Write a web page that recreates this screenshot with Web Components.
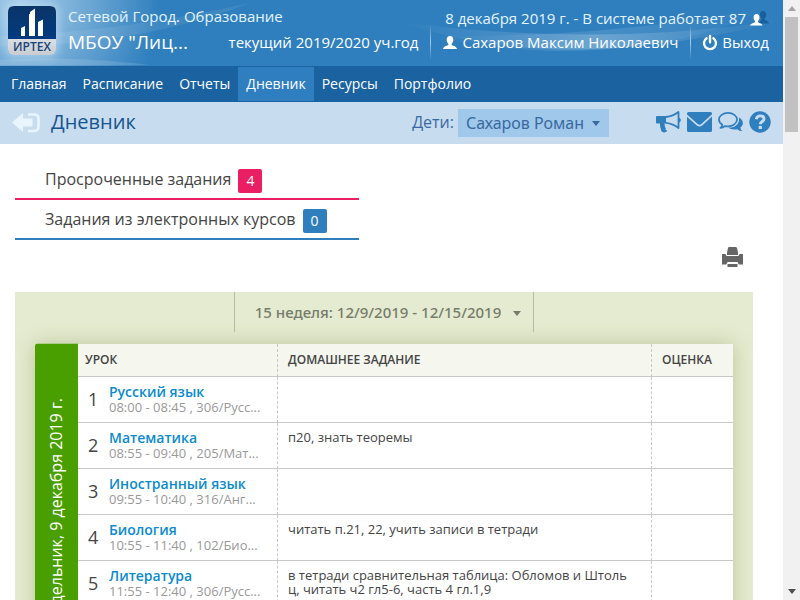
<!DOCTYPE html>
<html lang="ru">
<head>
<meta charset="utf-8">
<meta name="viewport" content="width=device-width, initial-scale=1">
<title>Дневник</title>
<style>
html,body{margin:0;height:100%}
body{font-family:"Open Sans","Noto Sans",sans-serif;color:#444;background:#fff}
</style>
</head>
<body>
<diary-app></diary-app>
<script>
const define=(name,html,setup)=>{
  const t=document.createElement('template');
  t.innerHTML=html;
  customElements.define(name,class extends HTMLElement{
    constructor(){super();this.attachShadow({mode:'open'}).append(t.content.cloneNode(true));}
    connectedCallback(){if(setup&&!this.ready){this.ready=true;setup(this,this.shadowRoot);}}
  });
};

const icons={
  user:['0 0 14 13','<path d="M7 0C4.8 0 3.7 1.6 3.7 3.6c0 1.900.7 3.400 1.700 4.200v1C4.800 9.800.6 10 0 13h14c-.6-3-4.800-3.200-5.400-4.200v-1c1-.8 1.700-2.300 1.700-4.200C10.300 1.600 9.200 0 7 0z"/>'],
  users:['0 0 19 15','<path fill="#195f9f" d="M13 0c-2 0-3 1.400-3 3.400 0 1.800.6 3.100 1.500 3.900v1.200C11 10 9 11 8 12.500h11c-.6-2.500-3.700-2.800-4.400-4V7.300c.9-.8 1.600-2.100 1.600-3.900C16.200 1.400 15 0 13 0z"/><path fill="#fff" d="M6.500 3C4.600 3 3.600 4.400 3.600 6.200c0 1.700.5 3 1.400 3.700v1C4.400 12 .6 12 0 14.600h12.500c-.5-2.600-4-2.600-4.500-3.700v-1c.9-.7 1.500-2 1.500-3.700C9.500 4.400 8.400 3 6.500 3z"/>'],
  power:['0 0 14 15','<path fill="none" stroke="currentColor" stroke-width="2.400" stroke-linecap="round" d="M3.600 3.200a6 6 0 1 0 6.800 0M7 1v6.300"/>'],
  back:['0 0 28 20','<path d="M0 9.500 11 0v5.500h9.500v8H11V19z"/><path fill="none" stroke="currentColor" stroke-width="2.600" d="M16 1.500h6q4.500 0 4.500 4v8q0 4.500-4.500 4.500h-6"/>'],
  horn:['0 0 25 22','<path d="M0 6q0-1 1-1h9v7.500H8.500l.5 3.500.9 1.200-.6 1 1.800 1.600C10.300 21.800 6.500 22 5.500 20.300 5 18 3.700 16 4 12.500H1q-1 0-1-1z"/><path fill="none" stroke="currentColor" stroke-width="1.800" stroke-linejoin="round" d="M10 6q7-.8 12.500-5v16Q17 12.600 10 11.800M23 7.300q2 1.800 0 3.600"/>'],
  mail:['0 0 25 20','<path d="M1.500 0h22Q25 0 25 1.500v.7L14.300 12q-1.800 1.600-3.600 0L0 2.500V1.500Q0 0 1.500 0zM0 4.700l9.800 8.700q2.700 2.200 5.400 0L25 4.500v14q0 1.500-1.500 1.500h-22Q0 20 0 18.500z"/>'],
  chat:['0 0 26 21','<path fill="none" stroke="currentColor" stroke-width="1.800" stroke-linejoin="round" d="M10.400.9c5.200 0 9.400 3.200 9.400 7s-4.200 7-9.400 7q-1.500 0-2.900-.3Q5 16.500 2.500 16.600q1.700-1.500 2-3.300C2.300 12 1 10.100 1 7.900c0-3.800 4.200-7 9.400-7z"/><path d="M21.700 5.600c5 2.800 5.600 7.800 1.500 10.400q.4 2.500 2.300 3.900-3.300 0-5.500-2c-4.200.8-7.200 0-9.500-1.700 7.400.4 12.600-4.200 11.200-10.600z"/>'],
  help:['0 0 22 22','<circle cx="11" cy="11" r="10.700"/><path fill="none" stroke="#c8dcf0" stroke-width="2.900" d="M7.300 8.200c.4-2.300 1.900-3.300 3.900-3.300 2.200 0 3.800 1.200 3.800 3 0 2.600-3.700 2.500-3.700 5.300"/><path fill="#c8dcf0" d="M9.700 14.900h3.200V18H9.700z"/>'],
  print:['0 0 21 21','<path d="M6 1q.3-1 1.200-1h6.600q.9 0 1.200 1l1 4.500V8H5V5.500zM0 7h3.500l1 2h12l1-2H21v10.500h-4.200L15.500 15h-10l-1.300 2.500H0zM5.500 17h10v3h-10z"/>'],
  caret:['0 0 8 5','<path d="M0 0h8L4 5z"/>']
};
define('ui-icon',`<style>:host{display:block;flex:none;width:16px}svg{display:block;width:100%;height:auto;fill:currentColor;overflow:visible}</style><svg aria-hidden="true"></svg>`,(h,r)=>{
  const [box,d]=icons[h.getAttribute('name')],s=r.querySelector('svg');
  s.setAttribute('viewBox',box);s.innerHTML=d;
});

define('app-logo',`<style>:host{display:block;width:48px;flex:none;align-self:flex-start;border-radius:6px;box-shadow:0 0 8px 3px #c9e3f688}svg{display:block}</style>
<svg viewBox="0 0 48 49" role="img" aria-label="ИРТЕХ"><defs><linearGradient id="b" x2="0" y2="1"><stop stop-color="#0b3568"/><stop offset="1" stop-color="#003b80"/></linearGradient><linearGradient id="w" x2="0" y2="1"><stop stop-color="#fff"/><stop offset="1" stop-color="#c9cdd3"/></linearGradient></defs>
<rect width="48" height="49" rx="6" fill="url(#w)"/><path d="M6 0h36q6 0 6 6v27H0V6q0-6 6-6z" fill="url(#b)"/>
<path fill="#fff" d="m13 22 4-2v10h-4zM22 6l5-3.500V30h-5zM21 8h1v22h-1zM30 16l5-2.500V30h-5z"/>
<text x="24" y="45" text-anchor="middle" font-family="Open Sans" font-weight="600" font-size="12" fill="#174477">ИРТЕХ</text></svg>`);

define('app-header',`<style>
:host{display:flex;position:relative;height:66px;box-sizing:border-box;padding:6px 14px 0 8px;background:#2f7fbe;color:#fff;font-family:"Open Sans","Noto Sans",sans-serif;font-size:15px;overflow:hidden}
.wave{position:absolute;inset:0;width:100%;height:100%}
app-logo,.left,.right{position:relative}
.left{flex:1;min-width:0;padding:0 12px}
.line{display:flex;align-items:center;justify-content:space-between;white-space:nowrap;height:20px;color:#e4f4ff}
.line+.line{height:32px;color:#fff}
h1{font-size:19px;font-weight:500;margin:0}
.right{flex:none}
.right .line{justify-content:flex-end;gap:4px;height:24px}
.right .line+.line{height:24px;gap:12px}
a{display:flex;align-items:center;gap:5px;color:inherit;text-decoration:none}
i{width:1px;height:36px;background:linear-gradient(#fff0,#fff9,#fff0)}
.f{width:14px}.g{width:19px}
</style>
<svg class="wave" viewBox="0 0 783 66" preserveAspectRatio="none" aria-hidden="true"><defs>
<radialGradient id="r" gradientUnits="userSpaceOnUse" cx="20" cy="5" r="140"><stop stop-color="#cfe8f8" stop-opacity=".75"/><stop offset="1" stop-color="#cfe8f8" stop-opacity="0"/></radialGradient>
<linearGradient id="l"><stop stop-color="#fff" stop-opacity="0"/><stop offset=".5" stop-color="#fff" stop-opacity=".2"/><stop offset="1" stop-color="#fff" stop-opacity="0"/></linearGradient></defs>
<rect width="300" height="66" fill="url(#r)"/><path d="M0 36Q120 32 250 3Q140 46 0 46z" fill="#fff" opacity=".08"/><path d="M0 60Q60 55 150 65H0z" fill="#fff" opacity=".13"/>
<path d="M400 22Q560 78 783 20Q600 48 400 22z" fill="url(#l)"/><path d="M430 36Q620 38 770 6Q690 52 550 51Q480 48 430 36z" fill="url(#l)" opacity=".6"/></svg>
<app-logo></app-logo>
<div class="left"><div class="line">Сетевой Город. Образование</div><div class="line"><h1>МБОУ "Лиц...</h1><span>текущий 2019/2020 уч.год</span></div></div>
<div class="right"><div class="line"><span>8 декабря 2019 г. - В системе работает 87</span><ui-icon class="g" name="users"></ui-icon></div>
<div class="line"><i></i><a href="#profile"><ui-icon class="f" name="user"></ui-icon>Сахаров Максим Николаевич</a><i></i><a href="#logout"><ui-icon class="f" name="power"></ui-icon>Выход</a></div></div>`);

define('main-nav',`<style>
:host{display:block;background:#1a62a0;color:#fff;padding:1px 3px}
nav{display:flex}
a{color:inherit;text-decoration:none;font-size:14px;line-height:34px;padding:0 8px;white-space:nowrap}
a[aria-current]{background:#2f7fc0}
</style><nav><a href="#home">Главная</a><a href="#schedule">Расписание</a><a href="#reports">Отчеты</a><a href="#diary" aria-current="page">Дневник</a><a href="#resources">Ресурсы</a><a href="#portfolio">Портфолио</a></nav>`);

define('page-bar',`<style>
:host{display:flex;align-items:center;height:42px;box-sizing:border-box;padding:0 12px;background:#c8dcf0;color:#39699f}
h2{margin:0 auto 2px 11px;font-size:20px;line-height:28px;font-weight:400;color:#16558f}
.back{color:#e8f5ff}.back ui-icon{width:28px}
label{font-size:16px;margin:0 4px 2px 0}
.pick{display:grid;align-items:center}
.pick>*{grid-area:1/1}
select{appearance:none;border:0;border-radius:0;background:#9fc8eb;color:inherit;font:16px "Noto Sans","Open Sans",sans-serif;height:28px;width:151px;padding:0 0 0 8px}
.pick ui-icon{justify-self:end;margin-right:9px;width:8px;pointer-events:none}
.tools{display:flex;align-items:center;gap:6px;margin:0 0 2px 47px;color:#2f7fbe}
a{display:block;color:inherit}
.tools ui-icon{width:25px}.tools .q{width:22px}
</style><a class="back" href="#back" aria-label="Назад"><ui-icon name="back"></ui-icon></a><h2>Дневник</h2>
<label for="child">Дети:</label><div class="pick"><select id="child"><option>Сахаров Роман</option></select><ui-icon name="caret"></ui-icon></div>
<div class="tools"><a href="#news" aria-label="Объявления"><ui-icon name="horn"></ui-icon></a><a href="#mail" aria-label="Почта"><ui-icon name="mail"></ui-icon></a><a href="#forum" aria-label="Форум"><ui-icon name="chat"></ui-icon></a><a href="#help" aria-label="Справка"><ui-icon class="q" name="help"></ui-icon></a></div>`);

define('task-link',`<style>
:host{display:block;--c:#2f7fbe}
:host([tone=pink]){--c:#e91e63}
a{display:flex;align-items:center;gap:7px;height:38px;padding-left:30px;border-bottom:2px solid var(--c);color:#444;text-decoration:none;font-size:16px;white-space:nowrap}
b{background:var(--c);color:#fff;font-weight:400;font-size:14px;line-height:24px;width:24px;text-align:center;border-radius:2px;margin-top:4px}
</style><a href="#tasks"><slot></slot><b></b></a>`,(h,r)=>{r.querySelector('b').textContent=h.getAttribute('count');});

define('week-picker',`<style>
:host{display:flex;justify-content:center}
button{display:flex;align-items:center;gap:12px;height:40px;padding:0 12px 0 20px;background:none;border:solid #b5bba3;border-width:0 1px;font:500 15px "Noto Sans","Open Sans",sans-serif;color:#777b6b;cursor:pointer;white-space:nowrap}
ui-icon{width:8px;margin-top:2px}
</style><button type="button" aria-haspopup="listbox"><slot></slot><ui-icon name="caret"></ui-icon></button>`);

define('day-card',`<style>
:host{display:flex;background:#fff;border-radius:2px;box-shadow:0 0 20px #6b7a3a55}
.day{flex:none;width:43px;box-sizing:border-box;writing-mode:vertical-rl;transform:rotate(180deg);text-align:end;padding-bottom:54px;line-height:43px;background:#4a9f00;color:#fff;font-size:16px;white-space:nowrap;border-radius:0 2px 2px 0}
table{flex:1;width:100%;border-collapse:separate;border-spacing:0;table-layout:fixed;align-self:flex-start}
th,td{box-sizing:border-box;border-bottom:1px solid #c8c8c8;text-align:left;vertical-align:top}
th+th,td+td{border-left:1px dashed #c8c8c8}
th{height:33px;padding:0 10px;background:#f5f6ed;font-size:12px;font-weight:600;line-height:32px}
th:first-child{padding-left:7px;width:199px}
th:last-child{width:82px}
td{height:46px;padding:7px 10px;font-size:13px;line-height:14px}
td:first-child{padding:0 0 0 10px}
.lesson{display:grid;grid-template-columns:21px 1fr;align-items:center;height:43px}
.n{font-size:18px;line-height:24px}
a{display:block;color:#0b8bcd;font-weight:600;font-size:14px;line-height:17px;text-decoration:none}
small{display:block;color:#999;font-size:13px;line-height:14px;white-space:nowrap}
</style><div class="day"><slot></slot></div><table><thead><tr><th scope="col">УРОК</th><th scope="col">ДОМАШНЕЕ ЗАДАНИЕ</th><th scope="col">ОЦЕНКА</th></tr></thead><tbody></tbody></table>`,(h,r)=>{
  r.querySelector('tbody').innerHTML=[
    ['Русский язык','08:00 - 08:45 , 306/Русс...',''],
    ['Математика','08:55 - 09:40 , 205/Мат...','п20, знать теоремы'],
    ['Иностранный язык','09:55 - 10:40 , 316/Анг...',''],
    ['Биология','10:55 - 11:40 , 102/Био...','читать п.21, 22, учить записи в тетради'],
    ['Литература','11:55 - 12:40 , 306/Русс...','в тетради сравнительная таблица: Обломов и Штоль<br>ц, читать ч2 гл5-6, часть 4 гл.1,9']
  ].map(([a,b,c],i)=>`<tr><td><div class="lesson"><span class="n">${i+1}</span><div><a href="#lesson${i+1}">${a}</a><small>${b}</small></div></div></td><td>${c}</td><td></td></tr>`).join('');
});

define('scroll-rail',`<style>
:host{display:flex;flex-direction:column;align-items:center;width:17px;flex:none;background:#f1f1f1;color:#505050}
ui-icon{width:8px;margin:6px 0}
.up{transform:rotate(180deg);color:#a3a3a3}
div{width:13px;height:115px;background:#c1c1c1;margin-bottom:auto}
</style><ui-icon class="up" name="caret"></ui-icon><div></div><ui-icon name="caret"></ui-icon>`);

define('diary-app',`<style>
:host{display:flex;height:100vh;overflow:hidden}
.page{flex:1;min-width:0;overflow:hidden}
main{padding:16px 30px 0 15px}
.tasks{width:50%;max-width:344px}
.print{display:block;width:21px;margin:7px 10px 24px auto;padding:0;border:0;background:none;color:#666;cursor:pointer}
.print ui-icon{width:21px}
.week{background:#e4ebd0;padding:0 20px 20px}
day-card{margin-top:12px}
</style><div class="page"><app-header></app-header><main-nav></main-nav><page-bar></page-bar>
<main><div class="tasks"><task-link tone="pink" count="4">Просроченные задания</task-link><task-link count="0">Задания из электронных курсов</task-link></div>
<button class="print" type="button" aria-label="Печать"><ui-icon name="print"></ui-icon></button>
<section class="week"><week-picker>15 неделя: 12/9/2019 - 12/15/2019</week-picker><day-card>Понедельник, 9 декабря 2019 г.</day-card></section></main></div><scroll-rail></scroll-rail>`);
</script>
</body>
</html>
